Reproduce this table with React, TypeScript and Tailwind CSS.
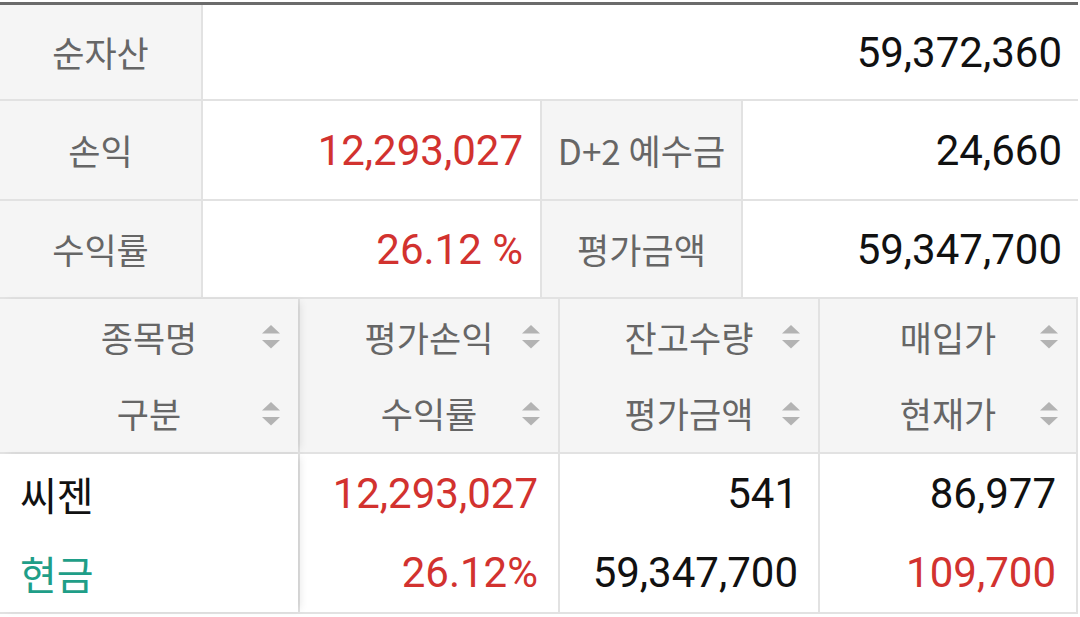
import React from "react";

const KR = "font-['Noto_Sans_CJK_KR','Noto_Sans',sans-serif]";
const NUM = "font-['Roboto','Noto_Sans_CJK_KR',sans-serif]";

const SortIcon = () => (
  <svg width="18" height="24" viewBox="0 0 18 24" className="absolute right-[18px] top-1/2 -translate-y-1/2">
    <polygon points="9,0 18,8.5 0,8.5" fill="#b3b3b3" />
    <polygon points="0,15 18,15 9,23.5" fill="#b3b3b3" />
  </svg>
);

const Label = ({ children }: { children: React.ReactNode }) => (
  <div className={`bg-[#f5f5f5] flex items-center justify-center text-[35px] text-[#666] ${KR}`}>
    {children}
  </div>
);

const Value = ({ children, red, className = "" }: { children: React.ReactNode; red?: boolean; className?: string }) => (
  <div
    className={`bg-white flex items-center justify-end pr-[17px] text-[42px] ${NUM} ${
      red ? "text-[#d2322f]" : "text-[#111]"
    } ${className}`}
  >
    {children}
  </div>
);

const HeadCell = ({ top, bottom, first }: { top: string; bottom: string; first?: boolean }) => (
  <div
    className={`bg-[#f5f5f5] flex flex-col ${first ? "relative z-10 shadow-[5px_0_8px_-3px_rgba(0,0,0,0.10)]" : ""}`}
  >
    <div className={`relative h-[76px] flex items-center justify-center text-[35px] text-[#666] ${KR}`}>
      {top}
      <SortIcon />
    </div>
    <div className={`relative h-[77px] flex items-center justify-center text-[35px] text-[#666] ${KR}`}>
      {bottom}
      <SortIcon />
    </div>
  </div>
);

const DataCell = ({
  top,
  bottom,
  topClass,
  bottomClass,
  first,
}: {
  top: string;
  bottom: string;
  topClass: string;
  bottomClass: string;
  first?: boolean;
}) => (
  <div
    className={`bg-white flex flex-col ${
      first ? "relative z-10 items-start pl-[20px] shadow-[5px_0_8px_-3px_rgba(0,0,0,0.10)]" : "items-end pr-[20px]"
    }`}
  >
    <div className={`h-[79px] flex items-center ${topClass}`}>{top}</div>
    <div className={`h-[79px] flex items-center ${bottomClass}`}>{bottom}</div>
  </div>
);

export default function App() {
  return (
    <div className="w-[1080px] h-[617px] bg-white overflow-hidden">
      <div className="h-[2px] bg-white" />
      <div className="w-[1078px] h-[3px] bg-[#6b6b6b]" />
      <div className="w-[1078px] bg-[#e2e2e2] flex flex-col gap-[2px] pr-[2px] pb-[2px]">
        <div className="grid grid-cols-[201px_337px_199px_336px] grid-rows-[94px_98px_96px] gap-[2px]">
          <Label>순자산</Label>
          <Value className="col-span-3">59,372,360</Value>
          <Label>손익</Label>
          <Value red>12,293,027</Value>
          <Label>D+2 예수금</Label>
          <Value>24,660</Value>
          <Label>수익률</Label>
          <Value red>26.12 %</Value>
          <Label>평가금액</Label>
          <Value>59,347,700</Value>
        </div>
        <div className="grid grid-cols-[298px_258px_258px_256px] gap-[2px]">
          <HeadCell first top="종목명" bottom="구분" />
          <HeadCell top="평가손익" bottom="수익률" />
          <HeadCell top="잔고수량" bottom="평가금액" />
          <HeadCell top="매입가" bottom="현재가" />
        </div>
        <div className="grid grid-cols-[298px_258px_258px_256px] gap-[2px]">
          <DataCell
            first
            top="씨젠"
            bottom="현금"
            topClass={`text-[40px] text-[#111] ${KR}`}
            bottomClass={`text-[40px] text-[#1f9e88] ${KR}`}
          />
          <DataCell
            top="12,293,027"
            bottom="26.12%"
            topClass={`text-[42px] text-[#d2322f] ${NUM}`}
            bottomClass={`text-[42px] text-[#d2322f] ${NUM}`}
          />
          <DataCell
            top="541"
            bottom="59,347,700"
            topClass={`text-[42px] text-[#111] ${NUM}`}
            bottomClass={`text-[42px] text-[#111] ${NUM}`}
          />
          <DataCell
            top="86,977"
            bottom="109,700"
            topClass={`text-[42px] text-[#111] ${NUM}`}
            bottomClass={`text-[42px] text-[#d2322f] ${NUM}`}
          />
        </div>
      </div>
    </div>
  );
}
